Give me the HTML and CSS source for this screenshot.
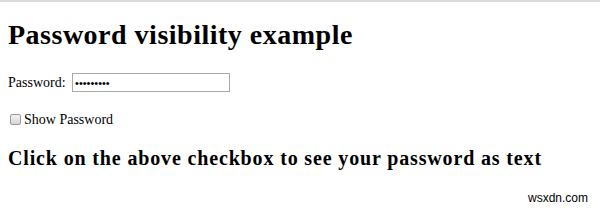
FILE: index.html
```html
<!DOCTYPE html>
<html lang="en">
<head>
    <meta charset="UTF-8">
    <title>Password visibility example</title>
    <link rel="stylesheet" href="styles.css">
</head>
<body>
    <div class="top-line"></div>
    <h1>Password visibility example</h1>
    <div class="field">
        <label for="pass">Password:</label>
        <input type="password" id="pass" value="abcdefghi">
    </div>
    <div class="show">
        <input type="checkbox" id="toggle"><label for="toggle">Show Password</label>
    </div>
    <h2>Click on the above checkbox to see your password as text</h2>
    <div class="mark">wsxdn.com</div>
    <script>
        document.getElementById('toggle').addEventListener('change', function() {
            const pass = document.getElementById('pass');
            pass.type = this.checked ? 'text' : 'password';
        });
    </script>
</body>
</html>
```

FILE: styles.css
```css
body {
    margin: 0;
    padding: 0 8px;
    font-family: "Liberation Serif", "Times New Roman", serif;
    font-size: 14px;
    color: #000;
    background: #fff;
}

.top-line {
    height: 2px;
    background-color: #dcdcdc;
    margin: 0 -8px;
}

h1 {
    font-size: 28px;
    letter-spacing: 0.5px;
    margin: 17px 0 22px;
}

.field input {
    box-sizing: border-box;
    width: 158px;
    height: 19px;
    margin-left: 3px;
    font-size: 11px;
    padding: 1px 2px;
    border: 1px solid #a9a9a9;
}

.show {
    margin-top: 20px;
}

.show input {
    appearance: none;
    box-sizing: border-box;
    width: 11px;
    height: 11px;
    margin: 0 3px 0 2px;
    vertical-align: -1px;
    border: 1px solid #9a9a9a;
    border-radius: 2px;
    background: linear-gradient(#f2f2f2, #d6d6d6);
}

.show input:checked {
    background: #d6d6d6;
    box-shadow: inset 0 0 0 2px #f2f2f2, inset 0 0 0 4px #333;
}

h2 {
    font-size: 20px;
    letter-spacing: 0.85px;
    margin: 19px 0 18px;
}

.mark {
    position: absolute;
    right: 12px;
    bottom: 6px;
    font-family: "Liberation Sans", Arial, sans-serif;
    font-size: 12px;
}
```
